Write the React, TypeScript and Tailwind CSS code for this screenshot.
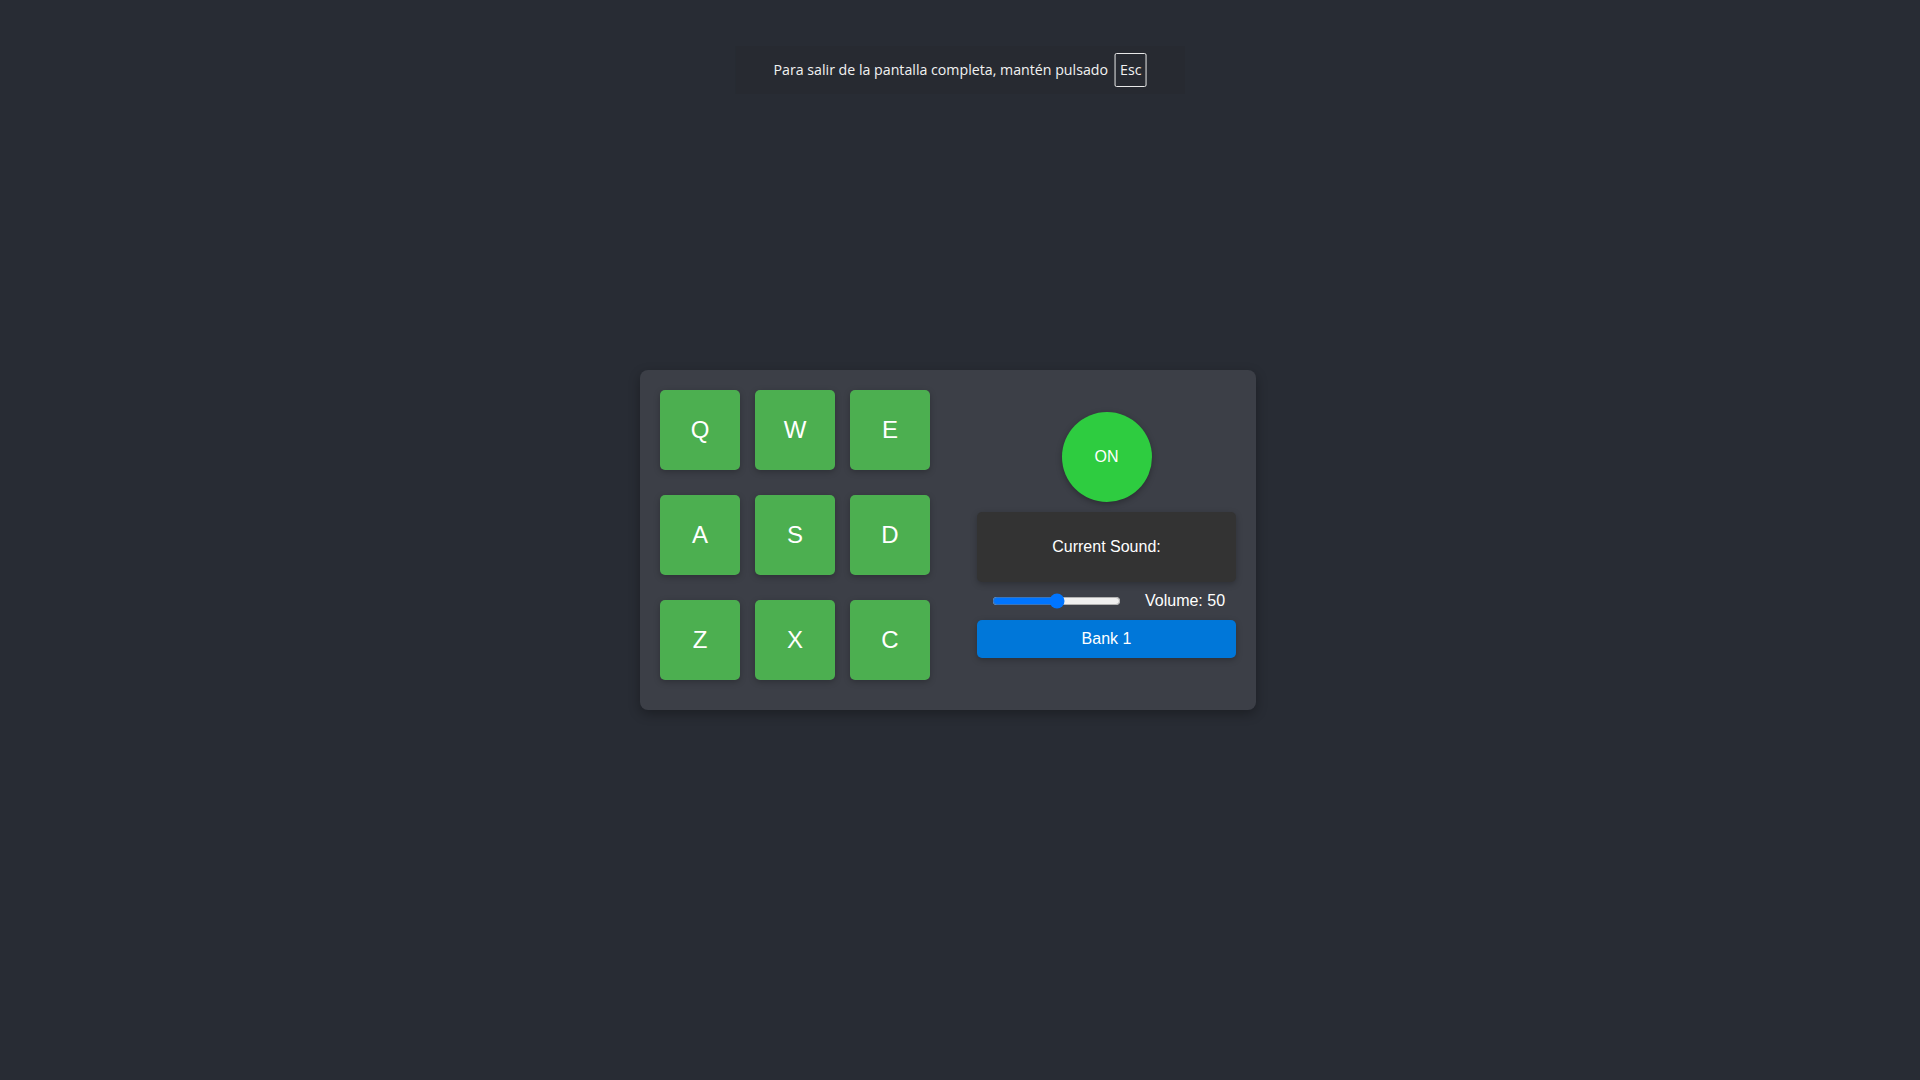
import { useState } from 'react'

const keys = ['Q', 'W', 'E', 'A', 'S', 'D', 'Z', 'X', 'C']

const Pad = ({ label }: { label: string }) => (
  <button className="flex h-[80px] w-[80px] items-center justify-center rounded-[5px] bg-[#4caf50] text-[24px] text-white shadow-[0_2px_6px_rgba(0,0,0,0.25)]">
    {label}
  </button>
)

const App = () => {
  const [volume, setVolume] = useState(50)

  return (
    <div className="relative flex min-h-screen items-center justify-center bg-[#282c34] pr-[24px] font-['Liberation_Sans',Arial,sans-serif]">
      <div className="absolute left-1/2 top-[46px] flex h-[48px] -translate-x-1/2 items-center gap-[7px] bg-[#272a31] px-[38px] font-['Open_Sans','Noto_Sans',sans-serif] text-[14.2px] text-[#f2f2f2]">
        <span>Para salir de la pantalla completa, mantén pulsado</span>
        <span className="flex h-[34px] items-center rounded-[2px] border border-[#e8e8e8] px-[4px]">
          Esc
        </span>
      </div>

      <div className="flex rounded-[8px] bg-[#3c3f47] pb-[30px] pl-[20px] pr-[20px] pt-[20px] shadow-[0_4px_12px_rgba(0,0,0,0.3)]">
        <div className="grid grid-cols-[80px_80px_80px] gap-x-[15px] gap-y-[25px]">
          {keys.map((k) => (
            <Pad key={k} label={k} />
          ))}
        </div>

        <div className="ml-[47px] flex w-[259px] flex-col items-center justify-center">
          <button className="flex h-[90px] w-[90px] items-center justify-center rounded-full bg-[#2ecc40] text-[16px] text-white shadow-[0_2px_6px_rgba(0,0,0,0.3)]">
            ON
          </button>
          <div className="mt-[10px] flex h-[70px] w-full items-center justify-center rounded-[5px] bg-[#333333] text-[16px] text-white shadow-[0_2px_6px_rgba(0,0,0,0.25)]">
            Current Sound:
          </div>
          <div className="mb-[5px] mt-[5px] flex h-[28px] w-full items-center gap-[24px] pl-[15px] text-[16px] text-white">
            <input
              type="range"
              min={0}
              max={100}
              value={volume}
              onChange={(e) => setVolume(Number(e.target.value))}
              className="w-[129px]"
            />
            <span>Volume: {volume}</span>
          </div>
          <button className="h-[38px] w-full rounded-[5px] bg-[#0077d9] text-[16px] text-white shadow-[0_2px_6px_rgba(0,0,0,0.25)]">
            Bank 1
          </button>
        </div>
      </div>
    </div>
  )
}

export default App
